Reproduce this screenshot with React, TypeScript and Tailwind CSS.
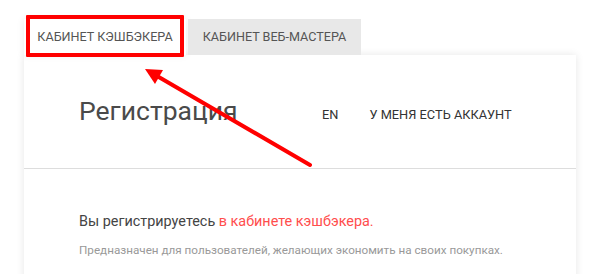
import React from 'react';

const font = { fontFamily: 'Roboto, "Noto Sans", sans-serif' };

const App: React.FC = () => {
  return (
    <div className="relative w-[594px] h-[274px] overflow-hidden bg-white" style={font}>
      <div className="flex gap-[2px] ml-[24px] mt-[19px]">
        <div className="flex items-center justify-center w-[162px] h-[36px] bg-white text-[12.6px] text-[#555] shadow-[0_0_8px_rgba(0,0,0,0.08)]">
          КАБИНЕТ КЭШБЭКЕРА
        </div>
        <div className="flex items-center justify-center w-[173px] h-[36px] bg-[#e8e8e8] text-[12.6px] text-[#555]">
          КАБИНЕТ ВЕБ-МАСТЕРА
        </div>
      </div>

      <div className="ml-[24px] w-[552px] h-[240px] bg-white shadow-[0_0_8px_rgba(0,0,0,0.1)]">
        <div className="flex items-center h-[114px] pl-[55px] pb-[2px] border-b border-[#dddddd]">
          <h2 className="text-[26.5px] font-normal text-[#4a4a4a] w-[243px]">Регистрация</h2>
          <span className="mt-[8px] text-[12.8px] text-[#333]">EN</span>
          <span className="mt-[8px] ml-[31px] text-[12.8px] text-[#333]">У МЕНЯ ЕСТЬ АККАУНТ</span>
        </div>
        <div className="pl-[55px] pt-[42px]">
          <p className="text-[14.4px] text-[#444]">
            Вы регистрируетесь <span className="text-[#ff4d4d]">в кабинете кэшбэкера.</span>
          </p>
          <p className="mt-[9px] text-[11.7px] text-[#999]">
            Предназначен для пользователей, желающих экономить на своих покупках.
          </p>
        </div>
      </div>

      <div className="absolute left-[26px] top-[15px] w-[158px] h-[42px] border-4 border-[#ff0000] rounded-[1px]" />
      <svg className="absolute left-0 top-0" width="594" height="274" viewBox="0 0 594 274">
        <line x1="310" y1="165" x2="157" y2="76" stroke="#ff0000" strokeWidth="4" strokeLinecap="round" />
        <polygon points="145,69 163,70 155,84" fill="#ff0000" />
      </svg>
    </div>
  );
};

export default App;
